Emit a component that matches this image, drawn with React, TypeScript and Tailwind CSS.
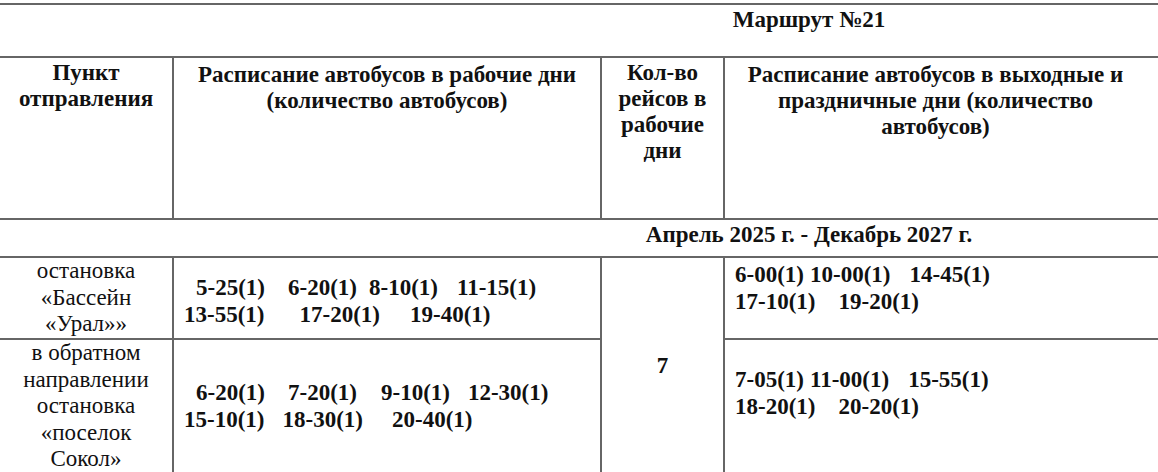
type Token = [string, string];

const line = "border-b-2 border-r-2 border-[#666]";

const TimeLine = ({ items }: { items: Token[] }) => {
  return (
    <div className="flex whitespace-nowrap">
      {items.map(([text, cls]) => (
        <span className={cls} key={text}>
          {text}
        </span>
      ))}
    </div>
  );
};

const weekdayTo: Token[][] = [
  [
    ["5-25(1)", "ml-[12px]"],
    ["6-20(1)", "ml-[23px]"],
    ["8-10(1)", "ml-[12px]"],
    ["11-15(1)", "ml-[19px]"],
  ],
  [
    ["13-55(1)", ""],
    ["17-20(1)", "ml-[35px]"],
    ["19-40(1)", "ml-[30px]"],
  ],
];

const weekdayBack: Token[][] = [
  [
    ["6-20(1)", "ml-[12px]"],
    ["7-20(1)", "ml-[23px]"],
    ["9-10(1)", "ml-[24px]"],
    ["12-30(1)", "ml-[18px]"],
  ],
  [
    ["15-10(1)", ""],
    ["18-30(1)", "ml-[18px]"],
    ["20-40(1)", "ml-[29px]"],
  ],
];

const weekendTo: Token[][] = [
  [
    ["6-00(1)", ""],
    ["10-00(1)", "ml-[6px]"],
    ["14-45(1)", "ml-[19px]"],
  ],
  [
    ["17-10(1)", ""],
    ["19-20(1)", "ml-[23px]"],
  ],
];

const weekendBack: Token[][] = [
  [
    ["7-05(1)", ""],
    ["11-00(1)", "ml-[6px]"],
    ["15-55(1)", "ml-[19px]"],
  ],
  [
    ["18-20(1)", ""],
    ["20-20(1)", "ml-[23px]"],
  ],
];

export default function App() {
  return (
    <div className="h-[472px] w-[1158px] overflow-hidden bg-white font-['Liberation_Serif',serif] text-[23px] leading-[26px] text-[#111]">
      <div className="-ml-[2px] mt-[3px] grid w-[1622px] grid-cols-[174px_428px_123px_435px_1fr] grid-rows-[53px_162px_38px_82px_135px] border-l-2 border-t-2 border-[#666]">
        {/* route title */}
        <div className={`${line} col-span-5 pt-[2px] text-center font-bold`}>
          Маршрут №21
        </div>

        {/* header */}
        <div className={`${line} pt-[2px] text-center font-bold`}>
          Пункт
          <br />
          отправления
        </div>
        <div className={`${line} pt-[4px] text-center font-bold`}>
          Расписание автобусов в рабочие дни
          <br />
          (количество автобусов)
        </div>
        <div className={`${line} pt-[2px] text-center font-bold`}>
          Кол-во
          <br />
          рейсов в
          <br />
          рабочие
          <br />
          дни
        </div>
        <div className={`${line} pr-[12px] pt-[4px] text-center font-bold`}>
          Расписание автобусов в выходные и
          <br />
          праздничные дни (количество
          <br />
          автобусов)
        </div>
        <div className={line} />

        {/* period */}
        <div className={`${line} col-span-5 pt-[2px] text-center font-bold`}>
          Апрель 2025 г. - Декабрь 2027 г.
        </div>

        {/* forward */}
        <div className={`${line} text-center leading-[26.5px]`}>
          остановка
          <br />
          «Бассейн
          <br />
          «Урал»»
        </div>
        <div className={`${line} pl-[10px] pt-[16px] font-bold leading-[27px]`}>
          {weekdayTo.map((items, i) => (
            <TimeLine items={items} key={i} />
          ))}
        </div>
        <div
          className={`${line} row-span-2 flex items-center justify-center font-bold leading-[27px]`}
        >
          7
        </div>
        <div className={`${line} pl-[10px] pt-[3px] font-bold leading-[27px]`}>
          {weekendTo.map((items, i) => (
            <TimeLine items={items} key={i} />
          ))}
        </div>
        <div className={`${line} row-span-2`} />

        {/* backward */}
        <div className={`${line} text-center leading-[26.5px]`}>
          в обратном
          <br />
          направлении
          <br />
          остановка
          <br />
          «поселок
          <br />
          Сокол»
        </div>
        <div className={`${line} pl-[10px] pt-[39px] font-bold leading-[27px]`}>
          {weekdayBack.map((items, i) => (
            <TimeLine items={items} key={i} />
          ))}
        </div>
        <div className={`${line} pl-[10px] pt-[26px] font-bold leading-[27px]`}>
          {weekendBack.map((items, i) => (
            <TimeLine items={items} key={i} />
          ))}
        </div>
      </div>
    </div>
  );
}
